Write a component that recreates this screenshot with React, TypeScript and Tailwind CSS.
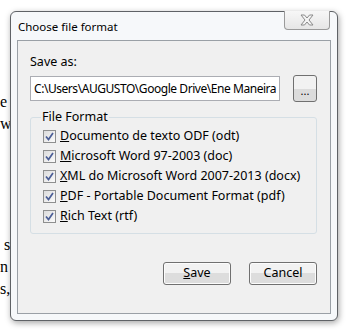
import { ReactNode } from "react";

const formats: { key: string; rest: string }[] = [
  { key: "D", rest: "ocumento de texto ODF (odt)" },
  { key: "M", rest: "icrosoft Word 97-2003 (doc)" },
  { key: "X", rest: "ML do Microsoft Word 2007-2013 (docx)" },
  { key: "P", rest: "DF - Portable Document Format (pdf)" },
  { key: "R", rest: "ich Text (rtf)" },
];

function CheckBox() {
  return (
    <span className="flex h-[13px] w-[13px] shrink-0 items-center justify-center border border-[#8e8f8f] bg-gradient-to-br from-[#dcdcdc] to-[#fbfbfb]">
      <svg width="9" height="9" viewBox="0 0 9 9">
        <path d="M1 4.5 L3.5 7.5 L8 1" fill="none" stroke="#4b5e96" strokeWidth="1.7" />
      </svg>
    </span>
  );
}

function Button({ children }: { children: ReactNode }) {
  return (
    <button className="flex h-[23px] w-[68px] items-center justify-center rounded-[3px] border border-[#707070] bg-gradient-to-b from-[#f2f2f2] from-50% to-[#dddddd] to-50% text-[12.5px] text-black shadow-[inset_0_0_0_1px_#fcfcfc]">
      {children}
    </button>
  );
}

function CloseIcon() {
  return (
    <svg width="16" height="12" viewBox="0 0 16 12">
      <path
        d="M2 1 H5.5 L8 4 L10.5 1 H14 L10 6 L14 11 H10.5 L8 8 L5.5 11 H2 L6 6 Z"
        fill="#f4f4f4"
        stroke="#8a8a8a"
        strokeWidth="1"
        strokeLinejoin="round"
      />
    </svg>
  );
}

export default function App() {
  return (
    <div
      className="relative h-[331px] w-[349px] overflow-hidden bg-white"
      style={{ fontFamily: '"Noto Sans", "Open Sans", sans-serif' }}
    >
      {/* document behind the dialog */}
      <div className="pt-[91px] text-[16px] leading-[22px] text-black" style={{ fontFamily: '"Liberation Serif", serif' }}>
        <p>e</p>
        <p>wo</p>
        <p className="mt-[99px]">&nbsp;st</p>
        <p>n</p>
        <p>s,</p>
      </div>

      {/* dialog window */}
      <div className="absolute left-[10px] top-[11px] flex h-[310px] w-[328px] flex-col rounded-[6px] border border-[#5f6266] bg-[#f6f8fa] px-[6px] pb-[6px] shadow-[1px_2px_6px_rgba(0,0,0,0.35)]">
        <div className="relative flex h-[28px] items-center pl-[1px] pt-[1px] text-[11.5px] text-black">
          Choose file format
          <div className="absolute -top-px right-[1px] flex h-[19px] w-[46px] items-center justify-center rounded-b-[4px] border border-t-0 border-[#9a9a9a] bg-gradient-to-b from-[#f7f7f7] to-[#e6e6e6]">
            <CloseIcon />
          </div>
        </div>

        <div className="flex flex-1 flex-col border border-[#9aa0a6] bg-[#f0f0f0] px-[12px] text-[12.5px] text-black">
          <div className="mt-[13px] h-[16px] leading-[16px]">Save as:</div>
          <div className="mt-[5px] flex items-center gap-[13px]">
            <div className="flex h-[25px] w-[250px] items-center overflow-hidden whitespace-nowrap border border-[#abadb3] bg-white pl-[3px] text-[12px] tracking-[-0.45px]">
              C:\Users\AUGUSTO\Google Drive\Ene Maneira
            </div>
            <div className="flex h-[27px] w-[24px] items-end justify-center rounded-[3px] border border-[#707070] bg-gradient-to-b from-[#f2f2f2] from-50% to-[#dcdcdc] to-50% pb-[6px] text-[11px] leading-[8px]">
              ...
            </div>
          </div>

          <fieldset className="mt-[8px] h-[124px] w-[287px] rounded-[3px] border border-[#d5dfe5] pl-[12px] pt-[2px]">
            <legend className="-ml-[2px] px-[1px] leading-[14px]">File Format</legend>
            <div className="flex flex-col">
              {formats.map((f) => (
                <label key={f.key} className="flex h-[20px] items-center gap-[4px] whitespace-nowrap">
                  <CheckBox />
                  <span>
                    <span className="underline">{f.key}</span>
                    {f.rest}
                  </span>
                </label>
              ))}
            </div>
          </fieldset>

          <div className="mt-[28px] flex justify-end gap-[18px] pr-[1px]">
            <Button>
              <span className="underline">S</span>ave
            </Button>
            <Button>Cancel</Button>
          </div>
        </div>
      </div>
    </div>
  );
}
